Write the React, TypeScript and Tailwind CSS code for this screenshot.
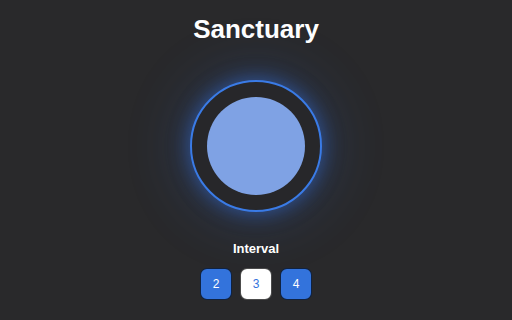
const intervals = [2, 3, 4];

export default function App() {
  const active = 3;

  return (
    <div className="flex h-[320px] w-full flex-col items-center bg-[#29292b] font-['Liberation_Sans',Arial,sans-serif] text-white">
      <h1 className="mt-[14px] text-[26px] font-bold leading-[30px]">Sanctuary</h1>

      <div className="mt-[36px] flex h-[132px] w-[132px] items-center justify-center rounded-full border-2 border-[#3a7be6] bg-[#27272a] shadow-[0_0_18px_2px_rgba(52,110,220,0.5),0_0_55px_10px_rgba(52,110,220,0.22)]">
        <div className="h-[98px] w-[98px] rounded-full bg-[#7fa2e4]" />
      </div>

      <div className="mt-[29px] text-[13px] font-bold leading-[16px]">Interval</div>

      <div className="mt-[11px] flex gap-2">
        {intervals.map((n) => (
          <button
            key={n}
            className={
              n === active
                ? "flex h-8 w-8 items-center justify-center rounded-[7px] border border-black/70 bg-white text-[12px] text-[#3373dc]"
                : "flex h-8 w-8 items-center justify-center rounded-[7px] border border-black/70 bg-[#3373dc] text-[12px] text-white"
            }
          >
            {n}
          </button>
        ))}
      </div>
    </div>
  );
}
